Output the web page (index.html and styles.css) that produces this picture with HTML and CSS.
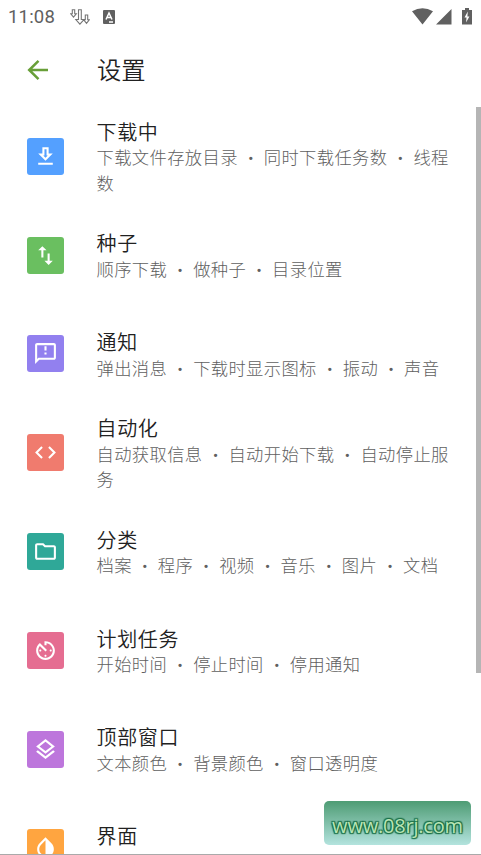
FILE: index.html
```html
<!DOCTYPE html>
<html lang="zh-CN">
<head>
<meta charset="utf-8">
<title>设置</title>
<link rel="stylesheet" href="styles.css">
</head>
<body>
<div class="screen">
  <div class="status">
    <span class="time">11:08</span>
    <svg class="arrows" width="20" height="16" viewBox="0 0 20 16" fill="#fff" stroke="#757575" stroke-width="1.1"><path d="M2.300 .8h2.400v4h1.600L3.500 8.200 .7 4.800h1.600zM8.500 .8h2.800v9.700h2.700L9.900 15.200l-4.100-4.700h2.700zM15.300 6h2.400v4.800h1.600l-2.800 3.600-2.800-3.600h1.600z"/></svg>
    <svg class="badge" width="12" height="14" viewBox="0 0 12 14"><rect width="12" height="14" rx="1" fill="#606060"/><path d="M3 9.500L6 3l3 6.500M4 7.500h4M6 12h4" fill="none" stroke="#fff" stroke-width="1.500"/></svg>
    <svg class="signals" width="62" height="18" viewBox="0 0 62 18" fill="#606060"><path d="M0 3.200Q10.500-2.800 21 3.200L10.500 16.500zM24 16.500L39.500 1v15.500zM50 2h3V0h4v2h3v14.500H50z"/><path d="M55.800 3.500l-3.300 6h2l-.4 5 3.300-6h-2z" fill="#fff"/></svg>
  </div>
  <header class="bar">
    <svg class="back" width="22" height="20" viewBox="0 0 22 20" fill="none" stroke="#689f38" stroke-width="2.500"><path d="M22 10H3M12.500 .9L3.200 10l9.300 9.100"/></svg>
    <h1>设置</h1>
  </header>
  <main class="list">
    <section class="row"><div class="icon blue"><svg viewBox="0 0 24 24"><path d="M19 9h-4V3H9v6H5l7 7 7-7zm-8 2V5h2v6h1.170L12 13.170 9.830 11H11zm-6 7h14v2H5z"/></svg></div><div class="text"><h2>下载中</h2><p>下载文件存放目录<i>•</i>同时下载任务数<i>•</i>线程数</p></div></section>
    <section class="row"><div class="icon green"><svg viewBox="0 0 24 24"><path d="M16 17.010V10h-2v7.010h-3L15 21l4-3.990h-3zM9 3L5 6.990h3V14h2V6.990h3L9 3z"/></svg></div><div class="text"><h2>种子</h2><p>顺序下载<i>•</i>做种子<i>•</i>目录位置</p></div></section>
    <section class="row"><div class="icon violet"><svg viewBox="0 0 24 24"><path d="M20 2H4c-1.100 0-2 .9-2 2v18l4-4h14c1.100 0 2-.9 2-2V4c0-1.100-.9-2-2-2zm0 14H5.170L4 17.170V4h16v12zM11 5h2v4h-2zm0 6h2v2h-2z"/></svg></div><div class="text"><h2>通知</h2><p>弹出消息<i>•</i>下载时显示图标<i>•</i>振动<i>•</i>声音</p></div></section>
    <section class="row"><div class="icon coral"><svg viewBox="0 0 24 24"><path d="M9.400 16.600L4.800 12l4.600-4.600L8 6l-6 6 6 6 1.400-1.400zm5.200 0l4.600-4.600-4.600-4.600L16 6l6 6-6 6-1.400-1.400z"/></svg></div><div class="text"><h2>自动化</h2><p>自动获取信息<i>•</i>自动开始下载<i>•</i>自动停止服务</p></div></section>
    <section class="row"><div class="icon teal"><svg viewBox="0 0 24 24"><path d="M9.170 6l2 2H20v10H4V6h5.170M10 4H4c-1.100 0-2 .9-2 2v12c0 1.100.9 2 2 2h16c1.100 0 2-.9 2-2V8c0-1.100-.9-2-2-2h-8l-2-2z"/></svg></div><div class="text"><h2>分类</h2><p>档案<i>•</i>程序<i>•</i>视频<i>•</i>音乐<i>•</i>图片<i>•</i>文档</p></div></section>
    <section class="row"><div class="icon pink"><svg viewBox="0 0 24 24"><path d="M11 17c0 .55.45 1 1 1s1-.45 1-1-.45-1-1-1-1 .45-1 1zm0-14v4h2V5.080c3.390.49 6 3.390 6 6.920 0 3.870-3.130 7-7 7s-7-3.130-7-7c0-1.680.59-3.220 1.580-4.420L12 13l1.410-1.410-6.800-6.800v.02C4.420 6.450 3 9.050 3 12c0 4.970 4.020 9 9 9 4.970 0 9-4.030 9-9s-4.030-9-9-9h-1zm7 9c0-.55-.45-1-1-1s-1 .45-1 1 .45 1 1 1 1-.45 1-1zM6 12c0 .55.45 1 1 1s1-.45 1-1-.45-1-1-1-1 .45-1 1z"/></svg></div><div class="text"><h2>计划任务</h2><p>开始时间<i>•</i>停止时间<i>•</i>停用通知</p></div></section>
    <section class="row"><div class="icon purple"><svg viewBox="0 0 24 24"><path d="M11.990 18.540l-7.370-5.730L3 14.070l9 7 9-7-1.630-1.270-7.380 5.740zM12 16l7.360-5.730L21 9l-9-7-9 7 1.630 1.270L12 16zm0-11.470L17.740 9 12 13.470 6.260 9 12 4.530z"/></svg></div><div class="text"><h2>顶部窗口</h2><p>文本颜色<i>•</i>背景颜色<i>•</i>窗口透明度</p></div></section>
    <section class="row"><div class="icon orange"><svg viewBox="0 0 24 24"><path d="M17.660 7.930L12 2.270 6.340 7.930c-3.120 3.120-3.120 8.190 0 11.310C7.900 20.800 9.950 21.580 12 21.580s4.100-.78 5.660-2.340c3.120-3.120 3.120-8.190 0-11.310zM12 19.590c-1.600 0-3.110-.62-4.240-1.760C6.620 16.690 6 15.190 6 13.590s.62-3.110 1.760-4.240L12 5.100v14.490z"/></svg></div><div class="text"><h2>界面</h2><p>主题<i>•</i>后台下载<i>•</i>文件夹颜色<i>•</i>排序</p></div></section>
  </main>
  <div class="scrollbar"></div>
  <div class="watermark">www.08rj.com</div>
</div>
</body>
</html>
```
FILE: styles.css
```css
* { box-sizing: border-box; }
body { margin: 0; background: #fff; font-family: Roboto, "Noto Sans CJK SC", sans-serif; }
.screen { position: relative; width: 481px; height: 855px; overflow: hidden; border-bottom: 1px solid #aaa; }
.status { display: flex; align-items: center; height: 33px; padding: 0 7px 0 8px; }
.time { width: 62px; font-size: 18.500px; color: #606060; letter-spacing: .2px; }
.badge { margin-left: 13px; }
.signals { margin-left: auto; width: 62px; }
.bar { display: flex; align-items: center; height: 74px; padding-left: 26px; }
.back { margin-right: 49px; position: relative; top: -.5px; }
h1 { margin: 0; padding-top: 1px; font-size: 24.300px; font-weight: 350; line-height: 36px; color: #212121; }
.row { display: flex; align-items: center; height: 98.800px; padding: 0 24px 0 27px; }
.icon { display: flex; flex: none; align-items: center; justify-content: center; width: 37px; height: 37px; margin-right: 32.500px; border-radius: 3px; }
.icon svg { width: 25px; height: 25px; fill: #fff; }
.text { flex: 1; min-width: 0; padding-top: 5.500px; }
h2 { margin: 0; font-size: 20px; font-weight: 350; line-height: 25.500px; letter-spacing: .65px; color: #212121; }
p { margin: 0; font-size: 17.300px; font-weight: 300; line-height: 25.500px; letter-spacing: .38px; color: #606060; }
p i { padding: 0 10.200px; font-style: normal; letter-spacing: 0; }
.blue { background: #54a0ff; }
.green { background: #6abf60; }
.violet { background: #9280ef; }
.coral { background: #f07b6e; }
.teal { background: #2fa898; }
.pink { background: #e56d91; }
.purple { background: #bd76dc; }
.orange { background: #ffa540; }
.scrollbar { position: absolute; top: 107px; right: 0; width: 5px; height: 566px; background: #b5b5b5; }
.watermark { position: absolute; left: 324px; top: 801px; width: 147px; height: 44px; border-radius: 5px; background: linear-gradient(#4e9c74, #b3e3de); font: 20px/49px "Open Sans", sans-serif; letter-spacing: -.2px; text-align: center; color: #b9e5b5; text-shadow: 0 0 2px #1c7048, 1px 1px 1px #1c7048, -1px -1px 1px #1c7048, 1px -1px 1px #1c7048, -1px 1px 1px #1c7048; }
```
